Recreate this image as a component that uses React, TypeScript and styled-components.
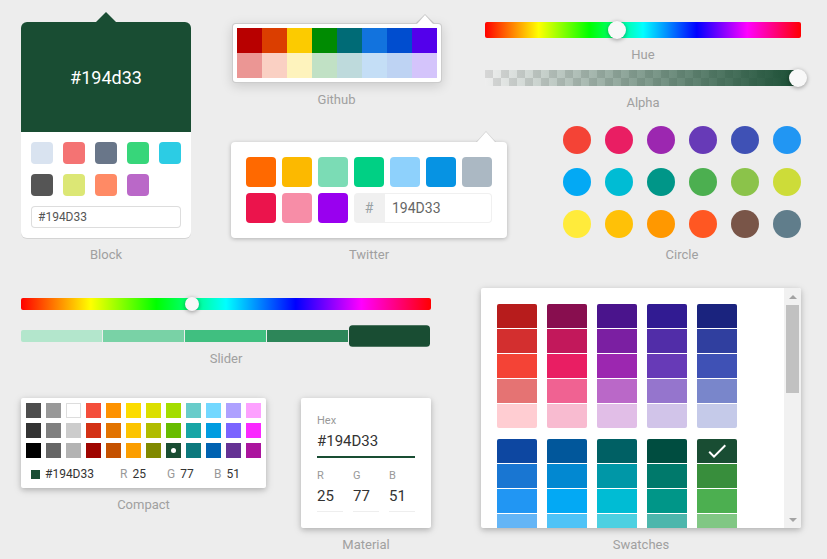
import React from 'react'
import styled, { createGlobalStyle } from 'styled-components'

const HEX = '#194D33'
const HUE = 150

const BLOCK_COLORS = ['#D9E3F0', '#F47373', '#697689', '#37D67A', '#2CCCE4', '#555555', '#dce775', '#ff8a65', '#ba68c8']
const GITHUB_COLORS = [
  '#B80000', '#DB3E00', '#FCCB00', '#008B02', '#006B76', '#1273DE', '#004DCF', '#5300EB',
  '#EB9694', '#FAD0C3', '#FEF3BD', '#C1E1C5', '#BEDADC', '#C4DEF6', '#BED3F3', '#D4C4FB',
]
const TWITTER_COLORS = ['#FF6900', '#FCB900', '#7BDCB5', '#00D084', '#8ED1FC', '#0693E3', '#ABB8C3', '#EB144C', '#F78DA7', '#9900EF']
const CIRCLE_COLORS = [
  '#f44336', '#e91e63', '#9c27b0', '#673ab7', '#3f51b5', '#2196f3',
  '#03a9f4', '#00bcd4', '#009688', '#4caf50', '#8bc34a', '#cddc39',
  '#ffeb3b', '#ffc107', '#ff9800', '#ff5722', '#795548', '#607d8b',
]
const COMPACT_COLORS = [
  '#4D4D4D', '#999999', '#FFFFFF', '#F44E3B', '#FE9200', '#FCDC00', '#DBDF00', '#A4DD00', '#68CCCA', '#73D8FF', '#AEA1FF', '#FDA1FF',
  '#333333', '#808080', '#CCCCCC', '#D33115', '#E27300', '#FCC400', '#B0BC00', '#68BC00', '#16A5A5', '#009CE0', '#7B64FF', '#FA28FF',
  '#000000', '#666666', '#B3B3B3', '#9F0500', '#C45100', '#FB9E00', '#808900', '#194D33', '#0C797D', '#0062B1', '#653294', '#AB149E',
]
const SWATCH_GROUPS = [
  ['#b71c1c', '#d32f2f', '#f44336', '#e57373', '#ffcdd2'],
  ['#880e4f', '#c2185b', '#e91e63', '#f06292', '#f8bbd0'],
  ['#4a148c', '#7b1fa2', '#9c27b0', '#ba68c8', '#e1bee7'],
  ['#311b92', '#512da8', '#673ab7', '#9575cd', '#d1c4e9'],
  ['#1a237e', '#303f9f', '#3f51b5', '#7986cb', '#c5cae9'],
  ['#0d47a1', '#1976d2', '#2196f3', '#64b5f6', '#bbdefb'],
  ['#01579b', '#0288d1', '#03a9f4', '#4fc3f7', '#b3e5fc'],
  ['#006064', '#0097a7', '#00bcd4', '#4dd0e1', '#b2ebf2'],
  ['#004d40', '#00796b', '#009688', '#4db6ac', '#b2dfdb'],
  ['#194D33', '#388E3C', '#4CAF50', '#81C784', '#C8E6C9'],
]
const SHADES = ['.80', '.65', '.50', '.35', '.20']

const HUE_GRADIENT = 'linear-gradient(to right, #f00 0%, #ff0 17%, #0f0 33%, #0ff 50%, #00f 67%, #f0f 83%, #f00 100%)'
const CARD_SHADOW = '0 2px 10px rgba(0,0,0,.12), 0 2px 5px rgba(0,0,0,.16)'

const GlobalStyle = createGlobalStyle`
  html, body {
    margin: 0;
    background: #ededed;
  }
  body {
    font-family: Roboto, 'Liberation Sans', sans-serif;
  }
  * {
    box-sizing: border-box;
  }
`

const Page = styled.div`
  width: 827px;
  height: 559px;
  padding: 22px 0 0 21px;
  overflow: hidden;
`

const TopRow = styled.div`
  display: flex;
  gap: 40px;
  align-items: flex-start;
`

const BottomRow = styled.div`
  display: flex;
  gap: 50px;
  align-items: flex-start;
  margin-top: 26px;
`

const Demo = styled.div<{ $w?: number }>`
  display: flex;
  flex-direction: column;
  align-items: center;
  width: ${({ $w }) => ($w ? `${$w}px` : 'auto')};
`

const Caption = styled.div`
  margin-top: 9px;
  font-size: 13px;
  line-height: 15px;
  color: #a0a0a0;
`

/* block */
const BlockCard = styled.div`
  position: relative;
  width: 170px;
  background: #fff;
  border-radius: 6px;
  box-shadow: 0 1px rgba(0, 0, 0, 0.1);

  &::before {
    content: '';
    position: absolute;
    top: -10px;
    left: 50%;
    margin-left: -10px;
    border-style: solid;
    border-width: 0 10px 10px;
    border-color: transparent transparent ${HEX};
  }
`

const BlockHead = styled.div`
  height: 110px;
  display: flex;
  align-items: center;
  justify-content: center;
  background: ${HEX};
  border-radius: 6px 6px 0 0;
  color: #fff;
  font-size: 18px;
`

const BlockBody = styled.div`
  padding: 10px;
`

const BlockGrid = styled.div`
  display: grid;
  grid-template-columns: repeat(5, 22px);
  gap: 10px;
`

const BlockSwatch = styled.div<{ $c: string }>`
  width: 22px;
  height: 22px;
  border-radius: 4px;
  background: ${({ $c }) => $c};
`

const BlockInput = styled.input`
  display: block;
  width: 100%;
  height: 22px;
  margin-top: 10px;
  padding: 0 0 0 7px;
  border: 0;
  border-radius: 4px;
  box-shadow: inset 0 0 0 1px #ddd;
  background: #fff;
  font-family: inherit;
  font-size: 12px;
  color: #555;
  outline: none;
`

/* right side of the top row */
const RightArea = styled.div`
  width: 570px;
  display: flex;
  flex-direction: column;
`

const SplitRow = styled.div<{ $gap?: number }>`
  display: flex;
  justify-content: space-between;
  align-items: flex-start;
  margin-top: ${({ $gap }) => $gap || 0}px;
`

/* github */
const GithubCard = styled.div`
  position: relative;
  width: 210px;
  margin: 1px 0 0 1px;
  padding: 4px;
  display: grid;
  grid-template-columns: repeat(8, 25px);
  background: #fff;
  border: 1px solid rgba(0, 0, 0, 0.2);
  border-radius: 4px;
  box-shadow: 0 3px 12px rgba(0, 0, 0, 0.15);

  &::before {
    content: '';
    position: absolute;
    top: -10px;
    right: 7px;
    border-style: solid;
    border-width: 0 9px 9px;
    border-color: transparent transparent rgba(0, 0, 0, 0.15);
  }
  &::after {
    content: '';
    position: absolute;
    top: -9px;
    right: 8px;
    border-style: solid;
    border-width: 0 8px 9px;
    border-color: transparent transparent #fff;
  }
`

const GithubSwatch = styled.div<{ $c: string }>`
  width: 25px;
  height: 25px;
  background: ${({ $c }) => $c};
`

/* hue + alpha */
const Bar = styled.div`
  position: relative;
  width: 316px;
  height: 16px;
`

const HueBar = styled(Bar)`
  background: ${HUE_GRADIENT};
  border-radius: 2px;
`

const AlphaBar = styled(Bar)`
  margin-top: 8px;
  background: linear-gradient(to right, rgba(25, 77, 51, 0), rgb(25, 77, 51)),
    repeating-conic-gradient(#eeeeee 0% 25%, #d6d6d6 0% 50%) 0 0 / 16px 16px;
`

const Knob = styled.div`
  position: absolute;
  top: -1px;
  width: 18px;
  height: 18px;
  margin-left: -9px;
  border-radius: 50%;
  background: #f8f8f8;
  box-shadow: 0 1px 4px rgba(0, 0, 0, 0.37);
`

/* twitter */
const TwitterCard = styled.div`
  position: relative;
  width: 276px;
  margin-top: 16px;
  padding: 15px 9px 9px 15px;
  display: flex;
  flex-wrap: wrap;
  background: #fff;
  border-radius: 4px;
  box-shadow: 0 1px 4px rgba(0, 0, 0, 0.25);

  &::before {
    content: '';
    position: absolute;
    top: -11px;
    right: 11px;
    border-style: solid;
    border-width: 0 10px 11px;
    border-color: transparent transparent rgba(0, 0, 0, 0.1);
  }
  &::after {
    content: '';
    position: absolute;
    top: -10px;
    right: 12px;
    border-style: solid;
    border-width: 0 9px 10px;
    border-color: transparent transparent #fff;
  }
`

const TwitterSwatch = styled.div<{ $c: string }>`
  width: 30px;
  height: 30px;
  margin: 0 6px 6px 0;
  border-radius: 4px;
  background: ${({ $c }) => $c};
`

const HashBox = styled.div`
  width: 30px;
  height: 30px;
  display: flex;
  align-items: center;
  justify-content: center;
  background: #f0f0f0;
  border-radius: 4px 0 0 4px;
  color: #98a1a4;
  font-size: 14px;
`

const TwitterInput = styled.input`
  width: 108px;
  height: 30px;
  margin-bottom: 6px;
  padding: 0 0 0 8px;
  border: 0;
  border-radius: 0 4px 4px 0;
  box-shadow: inset 0 0 0 1px #f0f0f0;
  background: #fff;
  font-family: inherit;
  font-size: 14px;
  color: #666;
  outline: none;
`

/* circle */
const CircleGrid = styled.div`
  display: grid;
  grid-template-columns: repeat(6, 28px);
  gap: 14px;
`

const CircleDot = styled.div<{ $c: string }>`
  width: 28px;
  height: 28px;
  border-radius: 50%;
  background: ${({ $c }) => $c};
`

/* slider */
const LeftCol = styled.div`
  width: 410px;
  display: flex;
  flex-direction: column;
`

const SliderWrap = styled.div`
  width: 410px;
  margin-top: 10px;
`

const SliderHue = styled.div`
  position: relative;
  height: 12px;
  border-radius: 2px;
  background: ${HUE_GRADIENT};
`

const SliderKnob = styled.div`
  position: absolute;
  top: -1px;
  width: 14px;
  height: 14px;
  margin-left: -7px;
  border-radius: 50%;
  background: #f8f8f8;
  box-shadow: 0 1px 4px rgba(0, 0, 0, 0.37);
`

const ShadeRow = styled.div`
  display: flex;
  margin-top: 20px;
`

const Shade = styled.div<{ $c: string; $active?: boolean }>`
  width: 81px;
  height: 12px;
  margin-right: 1px;
  background: ${({ $c }) => $c};
  &:first-child {
    border-radius: 2px 0 0 2px;
  }
  &:last-child {
    border-radius: 0 2px 2px 0;
  }
  ${({ $active }) => $active && 'transform: scaleY(1.8); border-radius: 3.6px / 2px !important;'}
`

const PickerRow = styled.div`
  display: flex;
  justify-content: space-between;
  align-items: flex-start;
  margin-top: 32px;
`

/* compact */
const CompactCard = styled.div`
  width: 245px;
  padding: 5px 0 3px 5px;
  background: #fff;
  border-radius: 2px;
  box-shadow: ${CARD_SHADOW};
`

const CompactGrid = styled.div`
  display: grid;
  grid-template-columns: repeat(12, 15px);
  gap: 5px;
`

const CompactSwatch = styled.div<{ $c: string }>`
  width: 15px;
  height: 15px;
  display: flex;
  align-items: center;
  justify-content: center;
  background: ${({ $c }) => $c};
  box-shadow: ${({ $c }) => ($c === '#FFFFFF' ? 'inset 0 0 0 1px #ddd' : 'none')};
`

const ActiveDot = styled.div`
  width: 5px;
  height: 5px;
  border-radius: 50%;
  background: #fff;
`

const CompactFields = styled.div`
  display: flex;
  align-items: center;
  height: 22px;
  margin-top: 5px;
  font-size: 12px;
  color: #333;
`

const ColorChip = styled.div`
  width: 9px;
  height: 9px;
  margin: 0 5px;
  background: ${HEX};
`

const HexText = styled.div`
  width: 75px;
`

const ChannelField = styled.div`
  width: 47px;
  display: flex;
  gap: 5px;
`

const ChannelLabel = styled.span`
  color: #999;
`

/* material */
const MaterialCard = styled.div`
  width: 130px;
  height: 130px;
  padding: 16px;
  background: #fff;
  border-radius: 2px;
  box-shadow: ${CARD_SHADOW};
`

const SmallLabel = styled.div`
  font-size: 11px;
  line-height: 13px;
  color: #999;
`

const HexValue = styled.div`
  padding: 5px 0 6px;
  font-size: 15px;
  line-height: 18px;
  color: #333;
  border-bottom: 2px solid ${HEX};
`

const RgbRow = styled.div`
  display: grid;
  grid-template-columns: repeat(3, 26px);
  gap: 10px;
  margin-top: 11px;
`

const RgbValue = styled.div`
  margin-top: 5px;
  padding-bottom: 6px;
  font-size: 15px;
  line-height: 18px;
  color: #333;
  border-bottom: 1px solid #eee;
`

/* swatches */
const SwatchesCard = styled.div`
  display: flex;
  width: 320px;
  height: 240px;
  overflow: hidden;
  background: #fff;
  border-radius: 2px;
  box-shadow: ${CARD_SHADOW};
`

const SwatchesBody = styled.div`
  flex: 1;
  padding: 16px 0 0 16px;
  display: flex;
  flex-wrap: wrap;
  align-content: flex-start;
  overflow: hidden;
`

const SwatchGroup = styled.div`
  width: 40px;
  margin-right: 10px;
  padding-bottom: 10px;
`

const SwatchCell = styled.div<{ $c: string }>`
  height: 24px;
  margin-bottom: 1px;
  display: flex;
  align-items: center;
  justify-content: center;
  background: ${({ $c }) => $c};
  &:first-child {
    border-radius: 2px 2px 0 0;
  }
  &:last-child {
    border-radius: 0 0 2px 2px;
  }
`

const ScrollTrack = styled.div`
  width: 17px;
  display: flex;
  flex-direction: column;
  background: #f1f1f1;
`

const ScrollButton = styled.div<{ $down?: boolean }>`
  height: 17px;
  display: flex;
  align-items: center;
  justify-content: center;
  &::after {
    content: '';
    border-left: 4px solid transparent;
    border-right: 4px solid transparent;
    ${({ $down }) => ($down ? 'border-top: 4px solid #a3a3a3;' : 'border-bottom: 4px solid #a3a3a3;')}
  }
`

const ScrollThumb = styled.div`
  height: 88px;
  margin: 0 2px;
  background: #c1c1c1;
`

const ScrollSpacer = styled.div`
  flex: 1;
`

const Check = () => (
  <svg width="24" height="24" viewBox="0 0 24 24">
    <path fill="#fff" d="M21,7L9,19L3.5,13.5L4.91,12.09L9,16.17L19.59,5.59L21,7Z" />
  </svg>
)

const huePct = `${(HUE / 360) * 100}%`

const App = () => {
  return (
    <Page>
      <GlobalStyle />
      <TopRow>
        <Demo>
          <BlockCard>
            <BlockHead>#194d33</BlockHead>
            <BlockBody>
              <BlockGrid>
                {BLOCK_COLORS.map((c) => (
                  <BlockSwatch key={c} $c={c} />
                ))}
              </BlockGrid>
              <BlockInput readOnly value={HEX} />
            </BlockBody>
          </BlockCard>
          <Caption>Block</Caption>
        </Demo>

        <RightArea>
          <SplitRow>
            <Demo>
              <GithubCard>
                {GITHUB_COLORS.map((c) => (
                  <GithubSwatch key={c} $c={c} />
                ))}
              </GithubCard>
              <Caption>Github</Caption>
            </Demo>
            <Demo $w={316}>
              <HueBar>
                <Knob style={{ left: huePct }} />
              </HueBar>
              <Caption>Hue</Caption>
              <AlphaBar>
                <Knob style={{ left: 'calc(100% - 3px)' }} />
              </AlphaBar>
              <Caption>Alpha</Caption>
            </Demo>
          </SplitRow>

          <SplitRow $gap={16}>
            <Demo>
              <TwitterCard>
                {TWITTER_COLORS.map((c) => (
                  <TwitterSwatch key={c} $c={c} />
                ))}
                <HashBox>#</HashBox>
                <TwitterInput readOnly value="194D33" />
              </TwitterCard>
              <Caption>Twitter</Caption>
            </Demo>
            <Demo $w={238}>
              <CircleGrid>
                {CIRCLE_COLORS.map((c) => (
                  <CircleDot key={c} $c={c} />
                ))}
              </CircleGrid>
              <Caption>Circle</Caption>
            </Demo>
          </SplitRow>
        </RightArea>
      </TopRow>

      <BottomRow>
        <LeftCol>
          <Demo>
            <SliderWrap>
              <SliderHue>
                <SliderKnob style={{ left: huePct }} />
              </SliderHue>
              <ShadeRow>
                {SHADES.map((l) => {
                  const active = l === '.20'
                  return <Shade key={l} $active={active} $c={active ? HEX : `hsl(${HUE}, 50%, ${Number(l) * 100}%)`} />
                })}
              </ShadeRow>
            </SliderWrap>
            <Caption>Slider</Caption>
          </Demo>

          <PickerRow>
            <Demo>
              <CompactCard>
                <CompactGrid>
                  {COMPACT_COLORS.map((c) => (
                    <CompactSwatch key={c} $c={c}>
                      {c === HEX && <ActiveDot />}
                    </CompactSwatch>
                  ))}
                </CompactGrid>
                <CompactFields>
                  <ColorChip />
                  <HexText>{HEX}</HexText>
                  <ChannelField>
                    <ChannelLabel>R</ChannelLabel>25
                  </ChannelField>
                  <ChannelField>
                    <ChannelLabel>G</ChannelLabel>77
                  </ChannelField>
                  <ChannelField>
                    <ChannelLabel>B</ChannelLabel>51
                  </ChannelField>
                </CompactFields>
              </CompactCard>
              <Caption>Compact</Caption>
            </Demo>

            <Demo>
              <MaterialCard>
                <SmallLabel>Hex</SmallLabel>
                <HexValue>{HEX}</HexValue>
                <RgbRow>
                  {[['R', 25], ['G', 77], ['B', 51]].map(([k, v]) => (
                    <div key={k}>
                      <SmallLabel>{k}</SmallLabel>
                      <RgbValue>{v}</RgbValue>
                    </div>
                  ))}
                </RgbRow>
              </MaterialCard>
              <Caption>Material</Caption>
            </Demo>
          </PickerRow>
        </LeftCol>

        <Demo>
          <SwatchesCard>
            <SwatchesBody>
              {SWATCH_GROUPS.map((group) => (
                <SwatchGroup key={group[0]}>
                  {group.map((c) => (
                    <SwatchCell key={c} $c={c}>
                      {c === HEX && <Check />}
                    </SwatchCell>
                  ))}
                </SwatchGroup>
              ))}
            </SwatchesBody>
            <ScrollTrack>
              <ScrollButton />
              <ScrollThumb />
              <ScrollSpacer />
              <ScrollButton $down />
            </ScrollTrack>
          </SwatchesCard>
          <Caption>Swatches</Caption>
        </Demo>
      </BottomRow>
    </Page>
  )
}

export default App
